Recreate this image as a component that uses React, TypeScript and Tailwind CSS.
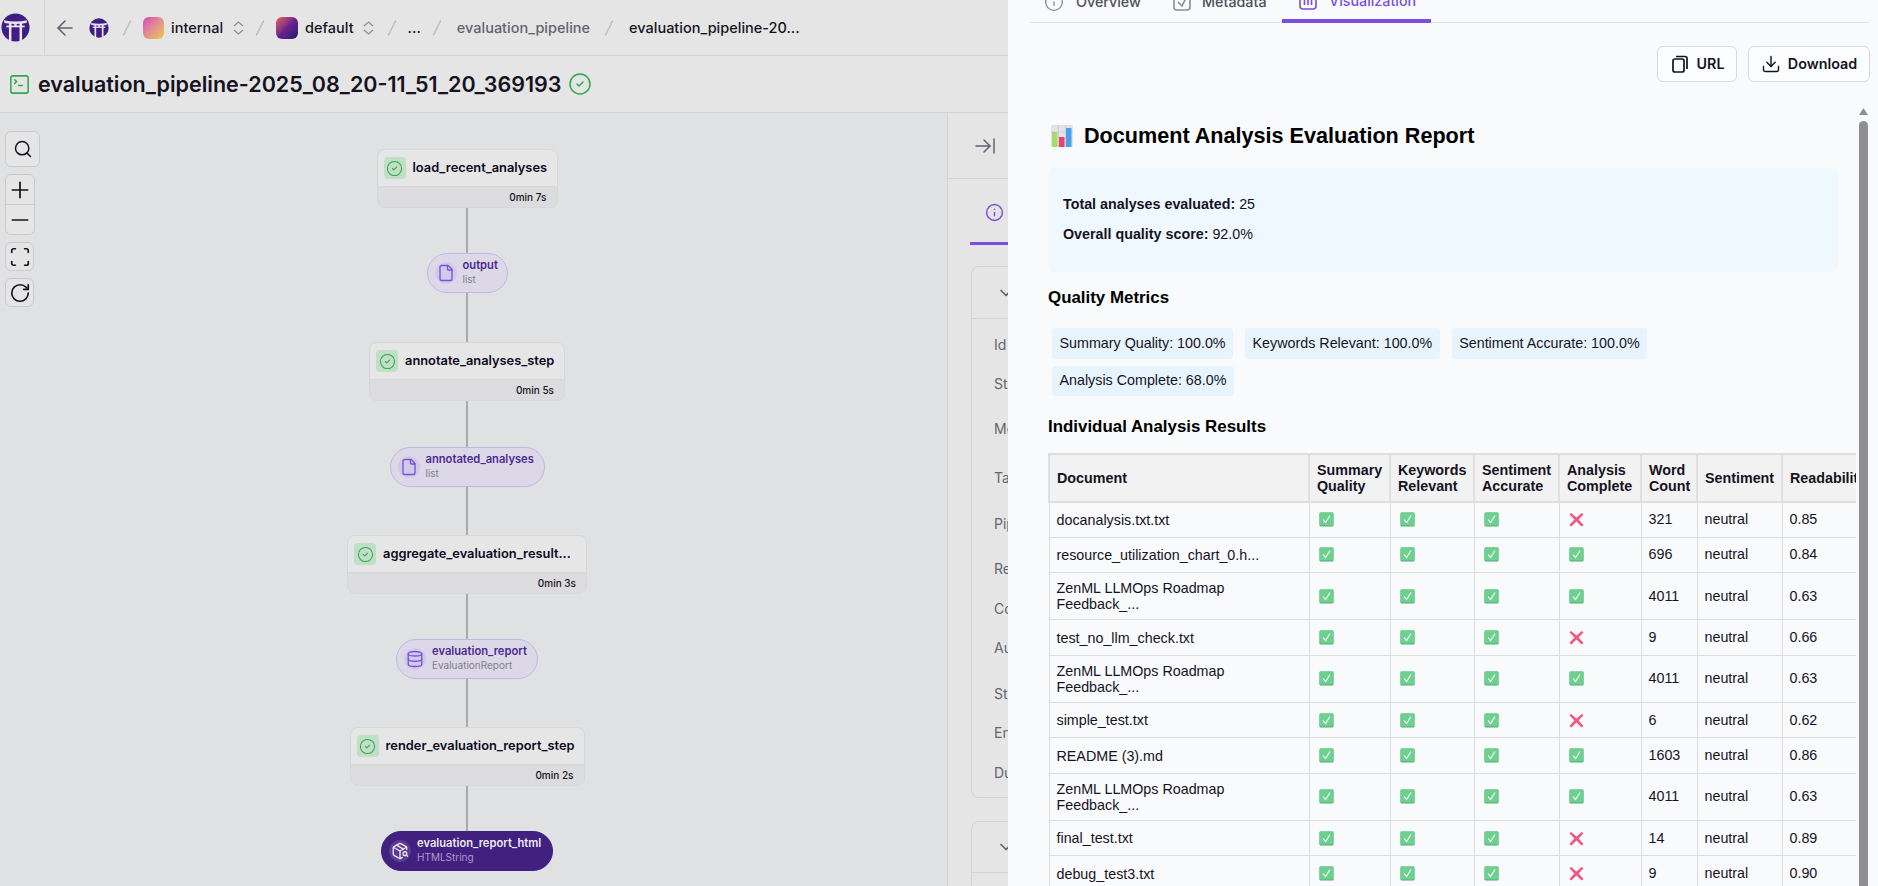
import {
  ArrowLeft,
  ArrowRightToLine,
  ChevronDown,
  CircleCheck,
  Database,
  Download,
  File,
  Info,
  Minus,
  PackageSearch,
  Plus,
  RotateCw,
  Scan,
  Search,
  SquareTerminal,
} from "lucide-react";

function Torii({ className }: { className: string }) {
  return (
    <svg viewBox="0 0 30 30" className={className}>
      <circle cx="15" cy="15" r="14.5" fill="#3f1d85" />
      <path d="M3 7.5 Q15 10 27 7.5 L26.4 10.4 Q15 12.4 3.6 10.4 Z" fill="#e8e4f2" />
      <rect x="5.5" y="13" width="19" height="1.8" fill="#e8e4f2" />
      <rect x="8.2" y="10" width="2.6" height="19" fill="#e8e4f2" />
      <rect x="19.2" y="10" width="2.6" height="19" fill="#e8e4f2" />
      <rect x="13.8" y="10.5" width="2.4" height="3" fill="#e8e4f2" />
    </svg>
  );
}

function Slash({ className }: { className: string }) {
  return <span className={`${className} block shrink-0 w-[8px] h-[16px] bg-[linear-gradient(to_top_left,transparent_44%,#c4c5c7_44%,#c4c5c7_56%,transparent_56%)]`}></span>;
}

function UpDown({ className }: { className: string }) {
  return (
    <svg viewBox="0 0 11 14" className={`${className} w-[11px] h-[14px] shrink-0`} fill="none" stroke="#8a8d94" strokeWidth="1.3">
      <path d="M1 5 L5.5 1 L10 5" />
      <path d="M1 9 L5.5 13 L10 9" />
    </svg>
  );
}

function StepNode({ name, time, width }: { name: string; time: string; width: string }) {
  return (
    <div className={`${width} h-[59px] shrink-0 rounded-lg border border-[#d6d7d9] bg-[#dcdcde] overflow-hidden`}>
      <div className="h-[37px] bg-[#e6e6e6] border-b border-[#d6d7d9] flex items-center pl-[6px] gap-[7px]">
        <div className="w-[22px] h-[22px] rounded bg-[#c1dfc6] flex items-center justify-center shrink-0">
          <CircleCheck className="w-[17px] h-[17px] text-[#2fa84f]" strokeWidth={1.5} />
        </div>
        <span className="text-[12.85px] leading-none font-semibold text-[#0d0a1e] whitespace-nowrap">{name}</span>
      </div>
      <div className="h-[21px] flex items-center justify-end pr-[10px] text-[10px] font-medium text-[#15131f]">{time}</div>
    </div>
  );
}

function ArtifactPill({ name, type, width, icon, dark }: { name: string; type: string; width: string; icon: "file" | "db" | "pkg"; dark?: boolean }) {
  const iconClass = `w-[18px] h-[18px] ${dark ? "text-[#e9e6f0]" : "text-[#7a4fe0]"}`;
  return (
    <div
      className={`${width} h-[40px] shrink-0 rounded-full border flex items-center pl-[7px] gap-[6px] ${
        dark ? "bg-[#41207f] border-[#41207f]" : "bg-[#dcd8e8] border-[#c3b5ea]"
      }`}
    >
      <div className={`w-[22px] h-[22px] rounded-full flex items-center justify-center shrink-0 ${dark ? "bg-[#5a3b92]" : "bg-[#d2cbe8]"}`}>
        {icon === "file" && <File className={iconClass} strokeWidth={1.8} />}
        {icon === "db" && <Database className={iconClass} strokeWidth={1.8} />}
        {icon === "pkg" && <PackageSearch className={iconClass} strokeWidth={1.8} />}
      </div>
      <div className="flex flex-col gap-[1px] -mt-[1px]">
        <span className={`text-[11.2px] leading-[13px] font-semibold whitespace-nowrap ${dark ? "text-[#ece9f3]" : "text-[#4b2a90]"}`}>{name}</span>
        <span className={`text-[10px] leading-[13px] ${dark ? "text-[#a99cc8]" : "text-[#7d7f88]"}`}>{type}</span>
      </div>
    </div>
  );
}

function Connector({ height }: { height: string }) {
  return <div className={`${height} w-[2px] bg-[#a9aaac] shrink-0`}></div>;
}

function ToolButton({ children, className }: { children: React.ReactNode; className: string }) {
  return <div className={`${className} border border-[#c9cacc] bg-[#e5e5e5] rounded-md flex items-center justify-center text-[#15131f]`}>{children}</div>;
}

const panelRows = [
  { label: "Id", height: "h-[39px]" },
  { label: "Status", height: "h-[45px]" },
  { label: "Message", height: "h-[49px]" },
  { label: "Tags", height: "h-[46px]" },
  { label: "Pipeline", height: "h-[45px]" },
  { label: "Repository", height: "h-[40px]" },
  { label: "Code Path", height: "h-[39px]" },
  { label: "Author", height: "h-[46px]" },
  { label: "Start", height: "h-[39px]" },
  { label: "End", height: "h-[40px]" },
  { label: "Duration", height: "h-[25px]" },
];

function CheckEmoji() {
  return (
    <svg viewBox="0 0 15 15" className="w-[15px] h-[15px] block">
      <rect x="0.5" y="0.5" width="14" height="14" rx="1.2" fill="#4fae73" />
      <rect x="0.5" y="0.5" width="14" height="13" rx="1.2" fill="#6dd08f" />
      <path d="M4 7.5 L6.6 10.5 L11 3.5" fill="none" stroke="#ffffff" strokeWidth="1.1" />
    </svg>
  );
}

function CrossEmoji() {
  return (
    <svg viewBox="0 0 15 15" className="w-[15px] h-[15px] block">
      <path d="M2.2 1 L7.5 5.6 L12.8 1 L14.6 2.2 L9.6 7.5 L14.6 13 L12.6 14.4 L7.5 9.6 L2.4 14.4 L0.4 13 L5.4 7.5 L0.4 2.2 Z" fill="#f0597f" />
    </svg>
  );
}

function ChartEmoji() {
  return (
    <svg viewBox="0 0 22 22" className="w-[22px] h-[22px] shrink-0">
      <rect x="0" y="0" width="22" height="22" rx="2" fill="#e4e1ea" />
      <path d="M7.5 0 V22 M14.5 0 V22 M0 7 H22 M0 14 H22" stroke="#cfccd6" strokeWidth="0.8" />
      <rect x="1" y="7" width="5.5" height="15" fill="#a6dc6a" />
      <rect x="8" y="12" width="5.5" height="10" fill="#ec3f78" />
      <rect x="15" y="3" width="5.5" height="19" fill="#4aa3e8" />
    </svg>
  );
}

const rows = [
  { doc: "docanalysis.txt.txt", ok: false, words: "321", read: "0.85" },
  { doc: "resource_utilization_chart_0.h...", ok: true, words: "696", read: "0.84" },
  { doc: "ZenML LLMOps Roadmap Feedback_...", ok: true, words: "4011", read: "0.63", tall: true },
  { doc: "test_no_llm_check.txt", ok: false, words: "9", read: "0.66" },
  { doc: "ZenML LLMOps Roadmap Feedback_...", ok: true, words: "4011", read: "0.63", tall: true },
  { doc: "simple_test.txt", ok: false, words: "6", read: "0.62" },
  { doc: "README (3).md", ok: true, words: "1603", read: "0.86" },
  { doc: "ZenML LLMOps Roadmap Feedback_...", ok: true, words: "4011", read: "0.63", tall: true },
  { doc: "final_test.txt", ok: false, words: "14", read: "0.89" },
  { doc: "debug_test3.txt", ok: false, words: "9", read: "0.90" },
];

const headers = ["Document", "Summary Quality", "Keywords Relevant", "Sentiment Accurate", "Analysis Complete", "Word Count", "Sentiment", "Readability"];
const metrics = ["Summary Quality: 100.0%", "Keywords Relevant: 100.0%", "Sentiment Accurate: 100.0%", "Analysis Complete: 68.0%"];

function PipelineSide() {
  return (
    <div className="w-[1008px] h-full shrink-0 flex flex-col overflow-hidden bg-[#e5e5e5]">
      <div className="h-[56px] shrink-0 border-b border-[#d2d3d5] flex items-center text-[14.5px]">
        <div className="w-[45px] h-full border-r border-[#d2d3d5] flex items-center pl-[1px] shrink-0">
          <Torii className="w-[29px] h-[29px]" />
        </div>
        <ArrowLeft className="ml-[8px] w-[24px] h-[24px] text-[#5e6370] shrink-0" strokeWidth={1.6} />
        <Torii className="ml-[12px] w-[20px] h-[20px] shrink-0" />
        <Slash className="ml-[14px]" />
        <div className="ml-[12px] w-[21px] h-[22px] rounded-md bg-linear-to-br from-[#d93fb6] to-[#e6cb3a] shrink-0"></div>
        <span className="ml-[7px] font-medium text-[#15131f]">internal</span>
        <UpDown className="ml-[10px]" />
        <Slash className="ml-[12px]" />
        <div className="ml-[12px] w-[22px] h-[22px] rounded-md bg-linear-to-br from-[#f25a4a] via-[#6b1f8c] to-[#1f1a6e] shrink-0"></div>
        <span className="ml-[7px] font-medium text-[#15131f]">default</span>
        <UpDown className="ml-[9px]" />
        <Slash className="ml-[14px]" />
        <span className="ml-[12px] font-medium text-[#15131f]">...</span>
        <Slash className="ml-[12px]" />
        <span className="ml-[16px] font-medium text-[#5f6470]">evaluation_pipeline</span>
        <Slash className="ml-[15px]" />
        <span className="ml-[16px] font-medium text-[#15131f] whitespace-nowrap">evaluation_pipeline-20...</span>
      </div>
      <div className="h-[57px] shrink-0 border-b border-[#d2d3d5] flex items-center pl-[8px]">
        <SquareTerminal className="w-[23px] h-[23px] text-[#2fa84f] shrink-0" strokeWidth={1.6} />
        <h1 className="ml-[7px] text-[21.5px] font-semibold text-[#15131f] whitespace-nowrap">evaluation_pipeline-2025_08_20-11_51_20_369193</h1>
        <CircleCheck className="ml-[7px] w-[24px] h-[24px] text-[#2fa84f] shrink-0" strokeWidth={1.5} />
      </div>
      <div className="flex-1 flex min-h-0">
        <div className="w-[934px] shrink-0 bg-[#e0e1e3] relative flex flex-col items-center pt-[36px]">
          <div className="absolute left-[5px] top-[18px] flex flex-col items-start gap-[7px]">
            <ToolButton className="w-[35px] h-[36px]"><Search className="w-[20px] h-[20px]" strokeWidth={1.8} /></ToolButton>
            <div className="w-[30px] h-[61px] border border-[#c9cacc] bg-[#e5e5e5] rounded-md flex flex-col text-[#15131f]">
              <div className="h-[30px] border-b border-[#c9cacc] flex items-center justify-center"><Plus className="w-[26px] h-[26px] shrink-0" strokeWidth={1.6} /></div>
              <div className="flex-1 flex items-center justify-center"><Minus className="w-[26px] h-[26px] shrink-0" strokeWidth={1.6} /></div>
            </div>
            <ToolButton className="w-[29px] h-[29px]"><Scan className="w-[22px] h-[22px]" strokeWidth={1.8} /></ToolButton>
            <ToolButton className="w-[29px] h-[29px]"><RotateCw className="w-[22px] h-[22px]" strokeWidth={1.8} /></ToolButton>
          </div>
          <StepNode name="load_recent_analyses" time="0min 7s" width="w-[181px]" />
          <Connector height="h-[45px]" />
          <ArtifactPill name="output" type="list" width="w-[81px]" icon="file" />
          <Connector height="h-[49px]" />
          <StepNode name="annotate_analyses_step" time="0min 5s" width="w-[196px]" />
          <Connector height="h-[46px]" />
          <ArtifactPill name="annotated_analyses" type="list" width="w-[155px]" icon="file" />
          <Connector height="h-[48px]" />
          <StepNode name="aggregate_evaluation_result..." time="0min 3s" width="w-[240px]" />
          <Connector height="h-[45px]" />
          <ArtifactPill name="evaluation_report" type="EvaluationReport" width="w-[142px]" icon="db" />
          <Connector height="h-[48px]" />
          <StepNode name="render_evaluation_report_step" time="0min 2s" width="w-[235px]" />
          <Connector height="h-[45px]" />
          <ArtifactPill name="evaluation_report_html" type="HTMLString" width="w-[172px]" icon="pkg" dark />
        </div>
        <div className="w-[13px] shrink-0 bg-[#e0e1e3]"></div>
        <div className="flex-1 border-l border-[#d2d3d5] bg-[#e5e5e5] min-w-0">
          <div className="h-[66px] border-b border-[#d2d3d5] flex items-center pl-[25px]">
            <ArrowRightToLine className="w-[24px] h-[24px] text-[#5e6370]" strokeWidth={1.5} />
          </div>
          <div className="ml-[22px] mt-[24px] h-[42px] w-[60px] border-b-[3px] border-[#7a4fe0] pl-[15px]">
            <Info className="w-[19px] h-[19px] text-[#7a4fe0]" strokeWidth={1.8} />
          </div>
          <div className="ml-[23px] mt-[21px] w-[300px] h-[532px] border border-[#d2d3d5] rounded-lg">
            <div className="h-[52px] border-b border-[#d2d3d5] flex items-center pl-[24px]">
              <ChevronDown className="w-[20px] h-[20px] text-[#5e6370]" />
            </div>
            <div className="pl-[22px] pt-[16px] text-sm text-[#62666f] whitespace-nowrap">
              {panelRows.map((row) => (
                <div key={row.label} className={row.height}>{row.label}</div>
              ))}
            </div>
          </div>
          <div className="ml-[23px] mt-[23px] w-[300px] h-[100px] border border-[#d2d3d5] rounded-lg">
            <div className="h-[51px] border-b border-[#d2d3d5] flex items-center pl-[24px]">
              <ChevronDown className="w-[20px] h-[20px] text-[#5e6370]" />
            </div>
          </div>
        </div>
      </div>
    </div>
  );
}

function Drawer() {
  return (
    <div className="flex-1 min-w-0 h-full flex flex-col bg-[#f9fafc] overflow-hidden">
      <div className="ml-[22px] mr-[8px] h-[41px] -mt-[18px] shrink-0 border-b border-[#e4e5e8] flex text-[14.3px] font-medium relative">
        <div className="w-[126px] pl-[14px] flex items-center gap-[12px] text-[#4d515b]">
          <Info className="w-[20px] h-[20px] text-[#8a8d94]" strokeWidth={1.6} />
          <span>Overview</span>
        </div>
        <div className="w-[126px] pl-[16px] flex items-center gap-[10px] text-[#4d515b]">
          <svg viewBox="0 0 20 20" className="w-[20px] h-[20px] text-[#8a8d94]" fill="none" stroke="currentColor" strokeWidth="1.6">
            <rect x="2" y="2" width="16" height="16" rx="3" />
            <path d="M6 10 L10 14 L14 6" />
          </svg>
          <span>Metadata</span>
        </div>
        <div className="w-[149px] -mb-px pl-[16px] border-b-[4px] border-[#7a4fe0] flex items-center gap-[11px] text-[#7a4fe0]">
          <svg viewBox="0 0 20 20" className="w-[20px] h-[20px]" fill="none" stroke="currentColor" strokeWidth="1.6">
            <rect x="2" y="2" width="16" height="16" rx="3" />
            <path d="M6.5 14 V8 M10 14 V5 M13.5 14 V9" />
          </svg>
          <span>Visualization</span>
        </div>
      </div>
      <div className="shrink-0 flex justify-end gap-[11px] pt-[23px] pr-[8px] text-[14.3px] font-semibold text-[#15131f]">
        <div className="w-[80px] h-[36px] border border-[#d8d9dc] rounded-md bg-[#fcfdfe] flex items-center justify-center gap-[7px]">
          <svg viewBox="0 0 20 20" className="w-[20px] h-[20px]" fill="none" stroke="currentColor" strokeWidth="1.7">
            <rect x="3" y="5" width="11" height="13" rx="2" />
            <path d="M6 2.5 H15 Q17 2.5 17 4.5 V15" />
          </svg>
          <span>URL</span>
        </div>
        <div className="w-[122px] h-[36px] border border-[#d8d9dc] rounded-md bg-[#fcfdfe] flex items-center justify-center gap-[7px]">
          <Download className="w-[20px] h-[20px]" strokeWidth={1.7} />
          <span>Download</span>
        </div>
      </div>
      <div className="flex-1 min-h-0 flex ml-[40px] mt-[21px] font-['Liberation_Sans',Arial,sans-serif] text-[14.3px] text-[#15131f]">
        <div className="w-[808px] shrink-0 overflow-hidden pt-[19px]">
          <div className="flex items-center gap-[11px] pl-[3px] h-[27px]">
            <ChartEmoji />
            <h2 className="text-[21.6px] leading-[27px] font-bold text-black whitespace-nowrap">Document Analysis Evaluation Report</h2>
          </div>
          <div className="mt-[19px] w-[790px] h-[104px] rounded-lg bg-[#f0f8ff] pl-[15px] pt-[28px] leading-[16px]">
            <p><strong>Total analyses evaluated:</strong> 25</p>
            <p className="mt-[14px]"><strong>Overall quality score:</strong> 92.0%</p>
          </div>
          <h3 className="mt-[17px] text-[16.9px] leading-[18px] font-bold text-black">Quality Metrics</h3>
          <div className="mt-[21px] ml-[4px] w-[780px] flex flex-wrap gap-x-[12px] gap-y-[7px]">
            {metrics.map((metric) => (
              <div key={metric} className="h-[30.5px] px-[7.5px] rounded bg-[#e8f4fd] flex items-center whitespace-nowrap">{metric}</div>
            ))}
          </div>
          <h3 className="mt-[22px] text-[16.9px] leading-[18px] font-bold text-black">Individual Analysis Results</h3>
          <table className="mt-[17px] w-[833px] table-fixed border-collapse">
            <colgroup>
              <col className="w-[260px]" />
              <col className="w-[81px]" />
              <col className="w-[84px]" />
              <col className="w-[85px]" />
              <col className="w-[82px]" />
              <col className="w-[56px]" />
              <col className="w-[85px]" />
              <col className="w-[100px]" />
            </colgroup>
            <thead>
              <tr className="h-[48px] bg-[#f2f2f2]">
                {headers.map((header) => (
                  <th key={header} className="border-2 border-[#e0e0e0] border-y-[#dddddd] px-[7px] text-left font-bold leading-[16px] whitespace-normal">{header}</th>
                ))}
              </tr>
            </thead>
            <tbody>
              {rows.map((row, i) => (
                <tr key={i} className={row.tall ? "h-[47.4px]" : "h-[35.3px]"}>
                  <td className="border border-[#dddddd] px-[7px] leading-[16px]">{row.doc}</td>
                  <td className="border border-[#dddddd] px-[9px]"><CheckEmoji /></td>
                  <td className="border border-[#dddddd] px-[9px]"><CheckEmoji /></td>
                  <td className="border border-[#dddddd] px-[9px]"><CheckEmoji /></td>
                  <td className="border border-[#dddddd] px-[9px]">{row.ok ? <CheckEmoji /> : <CrossEmoji />}</td>
                  <td className="border border-[#dddddd] px-[7px]">{row.words}</td>
                  <td className="border border-[#dddddd] px-[7px]">neutral</td>
                  <td className="border border-[#dddddd] px-[7px]">{row.read}</td>
                </tr>
              ))}
            </tbody>
          </table>
        </div>
        <div className="ml-[3px] w-[9px] shrink-0 flex flex-col items-center pt-[5px]">
          <svg viewBox="0 0 9 7" className="w-[9px] h-[7px]"><path d="M4.5 0 L9 7 H0 Z" fill="#8f8f8f" /></svg>
          <div className="mt-[6px] w-[9px] flex-1 rounded-t-full bg-[#8f8f8f]"></div>
        </div>
      </div>
    </div>
  );
}

export default function App() {
  return (
    <div className="h-screen w-screen flex overflow-hidden font-[Inter,sans-serif]">
      <PipelineSide />
      <Drawer />
    </div>
  );
}
